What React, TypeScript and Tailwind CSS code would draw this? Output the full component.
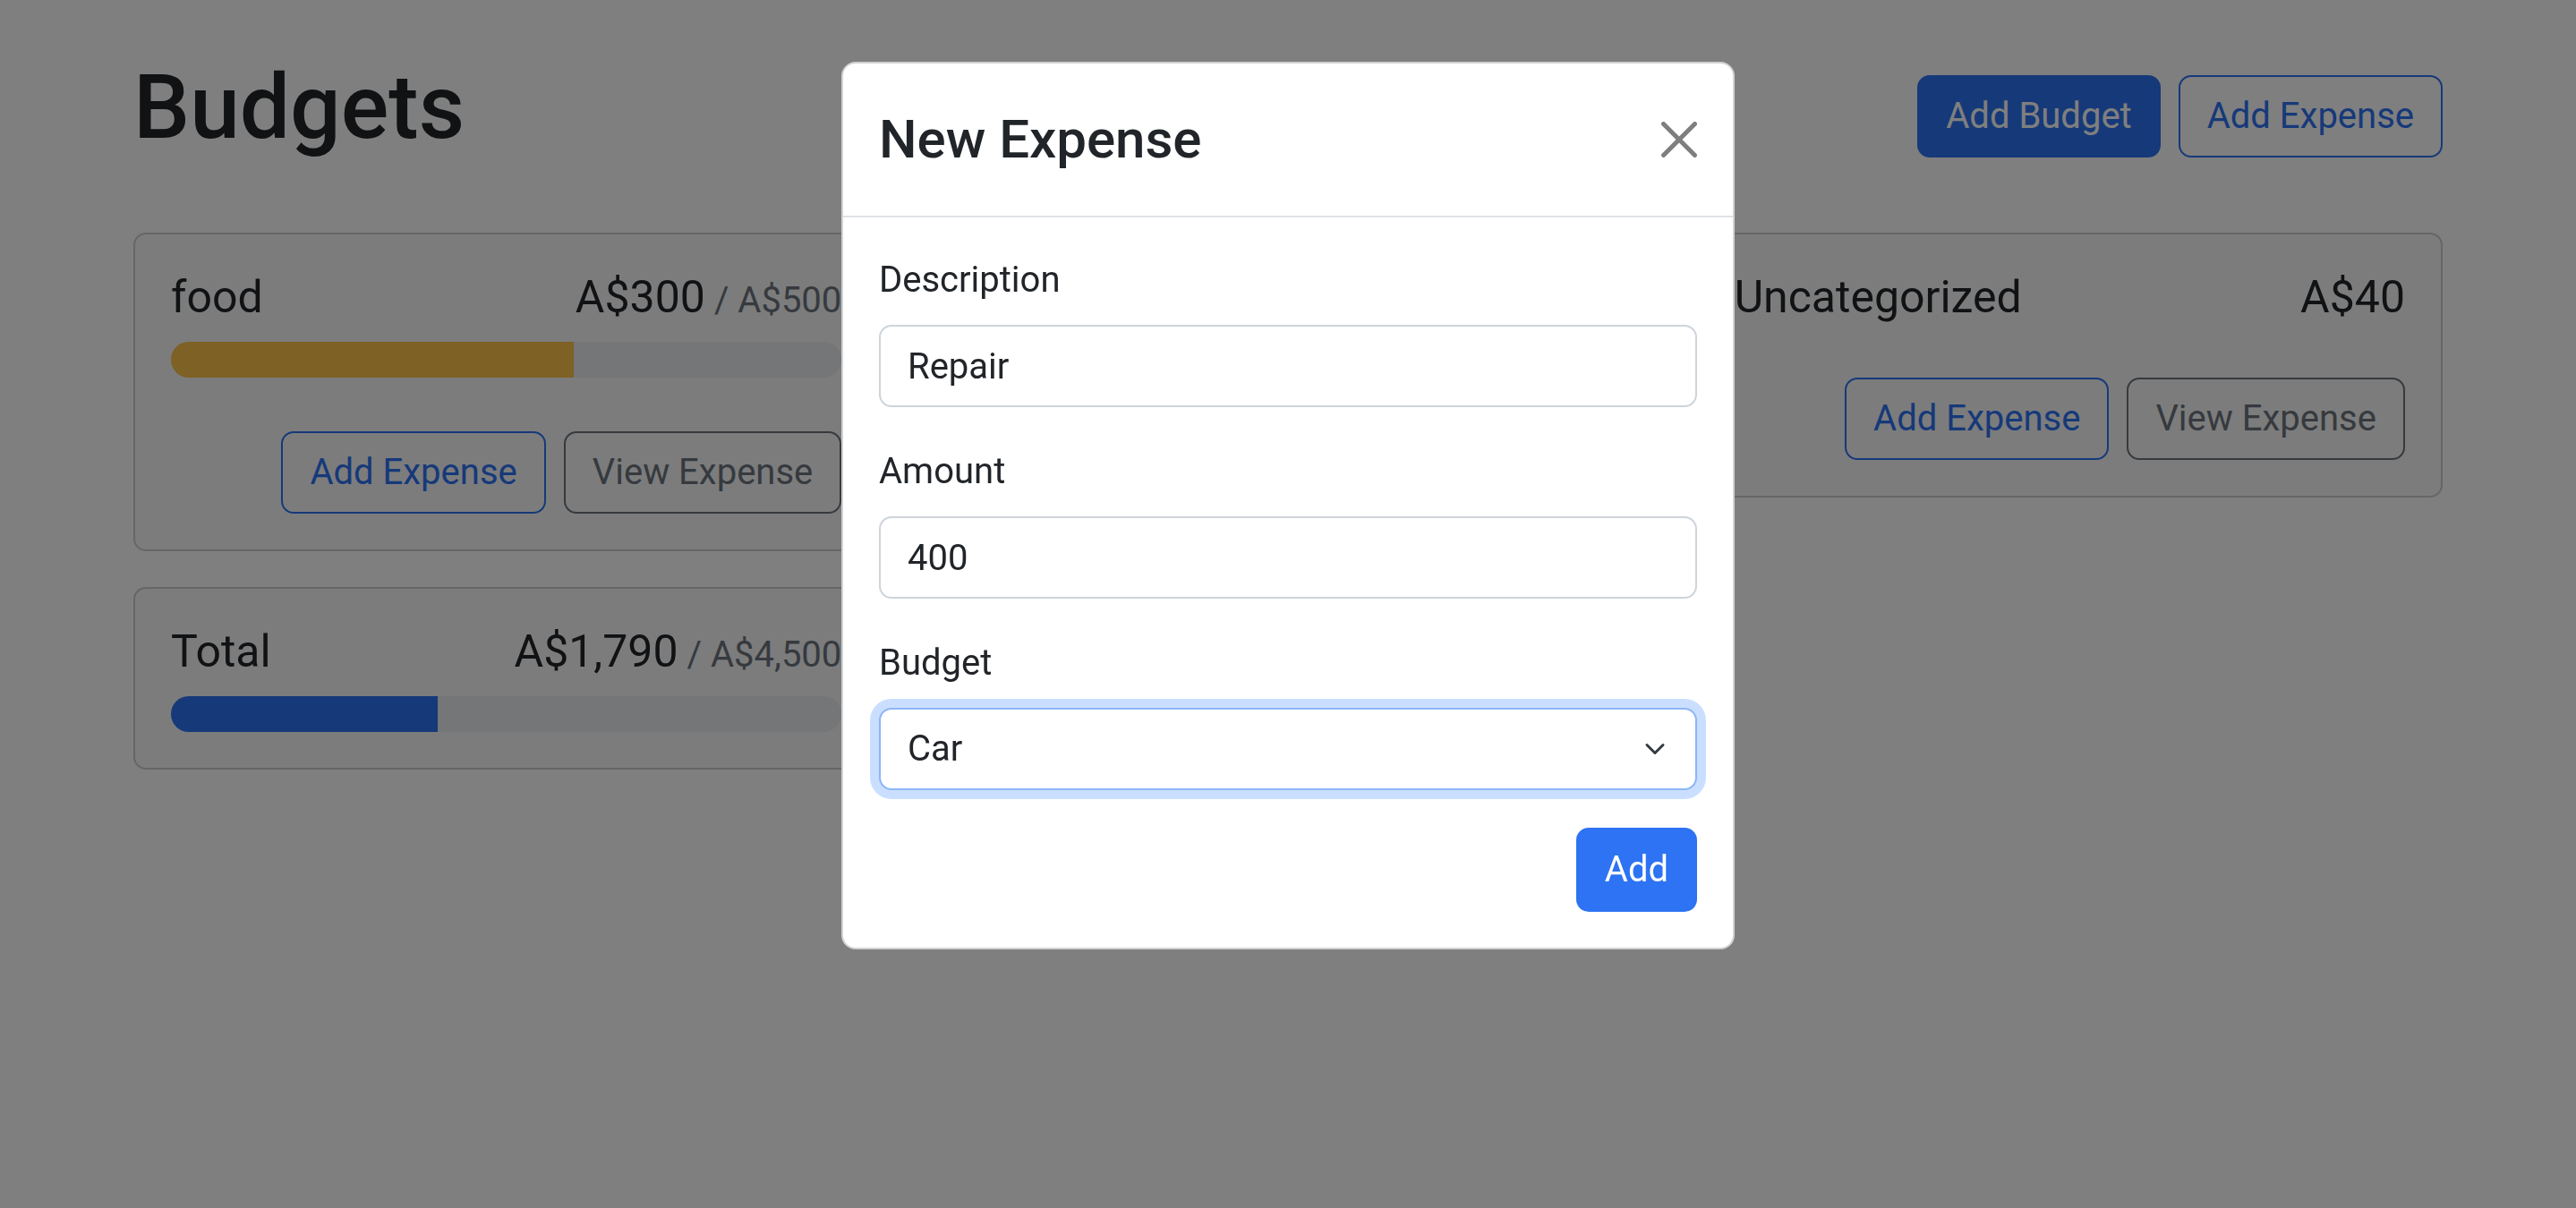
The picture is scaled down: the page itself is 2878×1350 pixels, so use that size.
import { useState } from "react";

type Budget = { id: string; name: string; amount: number; max?: number };

const budgets: Budget[] = [
  { id: "food", name: "food", amount: 300, max: 500 },
  { id: "car", name: "Car", amount: 1450, max: 4000 },
];

const UNCATEGORIZED = 40;

function formatMoney(n: number) {
  return "A$" + n.toLocaleString("en-US");
}

function barVariant(amount: number, max: number) {
  const ratio = amount / max;
  if (ratio < 0.5) return "bg-[#2d73f3]";
  if (ratio < 0.75) return "bg-[#fcc248]";
  return "bg-[#dc3545]";
}

const btnBase =
  "h-[92px] rounded-[14px] border-2 px-[30px] text-[40px] leading-[1.5] whitespace-nowrap";

function BudgetCard({
  name,
  amount,
  max,
  hideButtons,
}: {
  name: string;
  amount: number;
  max?: number;
  hideButtons?: boolean;
}) {
  return (
    <div className="rounded-[14px] border-2 border-black/[0.175] bg-[#f8f9fa] p-[40px]">
      <div className="mb-[20px] flex items-baseline justify-between text-[50px] leading-[1.2]">
        <div className="mr-[20px]">{name}</div>
        <div className="flex items-baseline">
          {formatMoney(amount)}
          {max != null && (
            <span className="ml-[10px] text-[40px] text-[#6c757d]">/ {formatMoney(max)}</span>
          )}
        </div>
      </div>
      {max != null && (
        <div className="flex h-[40px] overflow-hidden rounded-full bg-[#e9ecef]">
          <div
            className={barVariant(amount, max)}
            style={{ width: `${(amount / max) * 100}%` }}
          />
        </div>
      )}
      {!hideButtons && (
        <div className="mt-[60px] flex gap-[20px]">
          <button className={`${btnBase} ml-auto border-[#2d73f3] text-[#2d73f3]`}>
            Add Expense
          </button>
          <button className={`${btnBase} border-[#6c757d] text-[#6c757d]`}>View Expense</button>
        </div>
      )}
    </div>
  );
}

function Field({ label, value }: { label: string; value: string }) {
  return (
    <div className="mb-[42px]">
      <label className="mb-[20px] block leading-[1.5]">{label}</label>
      <input
        readOnly
        value={value}
        className="block h-[92px] w-full rounded-[14px] border-2 border-[#ced4da] bg-white px-[30px] text-[40px] text-[#212529] outline-none"
      />
    </div>
  );
}

function NewExpenseModal() {
  const [budgetId, setBudgetId] = useState("car");
  return (
    <div className="fixed inset-0 flex justify-center pt-[69px]">
      <div className="h-fit w-[998px] rounded-[16px] border-2 border-black/[0.175] bg-white">
        <div className="flex items-center border-b-2 border-[#dee2e6] p-[40px]">
          <div className="text-[60px] font-medium leading-[1.5]">New Expense</div>
          <button className="ml-auto h-[40px] w-[40px]" aria-label="Close">
            <svg viewBox="0 0 16 16" className="h-[40px] w-[40px]" fill="#000" opacity="0.5">
              <path d="M.293.293a1 1 0 0 1 1.414 0L8 6.586 14.293.293a1 1 0 1 1 1.414 1.414L9.414 8l6.293 6.293a1 1 0 0 1-1.414 1.414L8 9.414l-6.293 6.293a1 1 0 0 1-1.414-1.414L6.586 8 .293 1.707a1 1 0 0 1 0-1.414z" />
            </svg>
          </button>
        </div>
        <div className="p-[40px]">
          <Field label="Description" value="Repair" />
          <Field label="Amount" value="400" />
          <div className="mb-[42px]">
            <label className="mb-[20px] block leading-[1.5]">Budget</label>
            <div className="relative">
              <select
                value={budgetId}
                onChange={(e) => setBudgetId(e.target.value)}
                className="block h-[92px] w-full appearance-none rounded-[14px] border-2 border-[#8cb6f8] bg-white px-[30px] text-[40px] text-[#212529] shadow-[0_0_0_10px_rgba(13,110,253,0.22)] outline-none"
              >
                <option value="uncategorized">Uncategorized</option>
                {budgets.map((b) => (
                  <option key={b.id} value={b.id}>
                    {b.name}
                  </option>
                ))}
              </select>
              <svg
                viewBox="0 0 16 16"
                className="pointer-events-none absolute right-[34px] top-1/2 h-[24px] w-[26px] -translate-y-1/2"
                fill="none"
                stroke="#343a40"
                strokeWidth="2"
                strokeLinecap="round"
                strokeLinejoin="round"
              >
                <path d="m2 5 6 6 6-6" />
              </svg>
            </div>
          </div>
          <div className="flex justify-end">
            <button className="h-[94px] rounded-[14px] border-2 border-[#2d73f3] bg-[#2d73f3] px-[30px] text-[40px] leading-[1.5] text-white">
              Add
            </button>
          </div>
        </div>
      </div>
    </div>
  );
}

export default function App() {
  const totalAmount = budgets.reduce((s, b) => s + b.amount, 0) + UNCATEGORIZED;
  const totalMax = budgets.reduce((s, b) => s + (b.max ?? 0), 0);

  return (
    <div className="min-h-screen bg-white font-['Roboto','Liberation_Sans',sans-serif] text-[40px] leading-[1.5] text-[#212529]">
      <div className="mx-auto w-[2640px] px-[30px] py-[60px]">
        <div className="mb-[60px] flex items-center gap-[20px]">
          <h1 className="mb-[20px] mr-auto text-[100px] font-medium leading-[1.2]">Budgets</h1>
          <button className={`${btnBase} border-[#2d73f3] bg-[#2d73f3] text-white`}>Add Budget</button>
          <button className={`${btnBase} border-[#2d73f3] text-[#2d73f3]`}>Add Expense</button>
        </div>
        <div className="grid grid-cols-3 items-start gap-[40px]">
          {budgets.map((b) => (
            <BudgetCard key={b.id} name={b.name} amount={b.amount} max={b.max} />
          ))}
          <BudgetCard name="Uncategorized" amount={UNCATEGORIZED} />
          <BudgetCard name="Total" amount={totalAmount} max={totalMax} hideButtons />
        </div>
      </div>

      <div className="fixed inset-0 bg-black/50" />
      <NewExpenseModal />
    </div>
  );
}
